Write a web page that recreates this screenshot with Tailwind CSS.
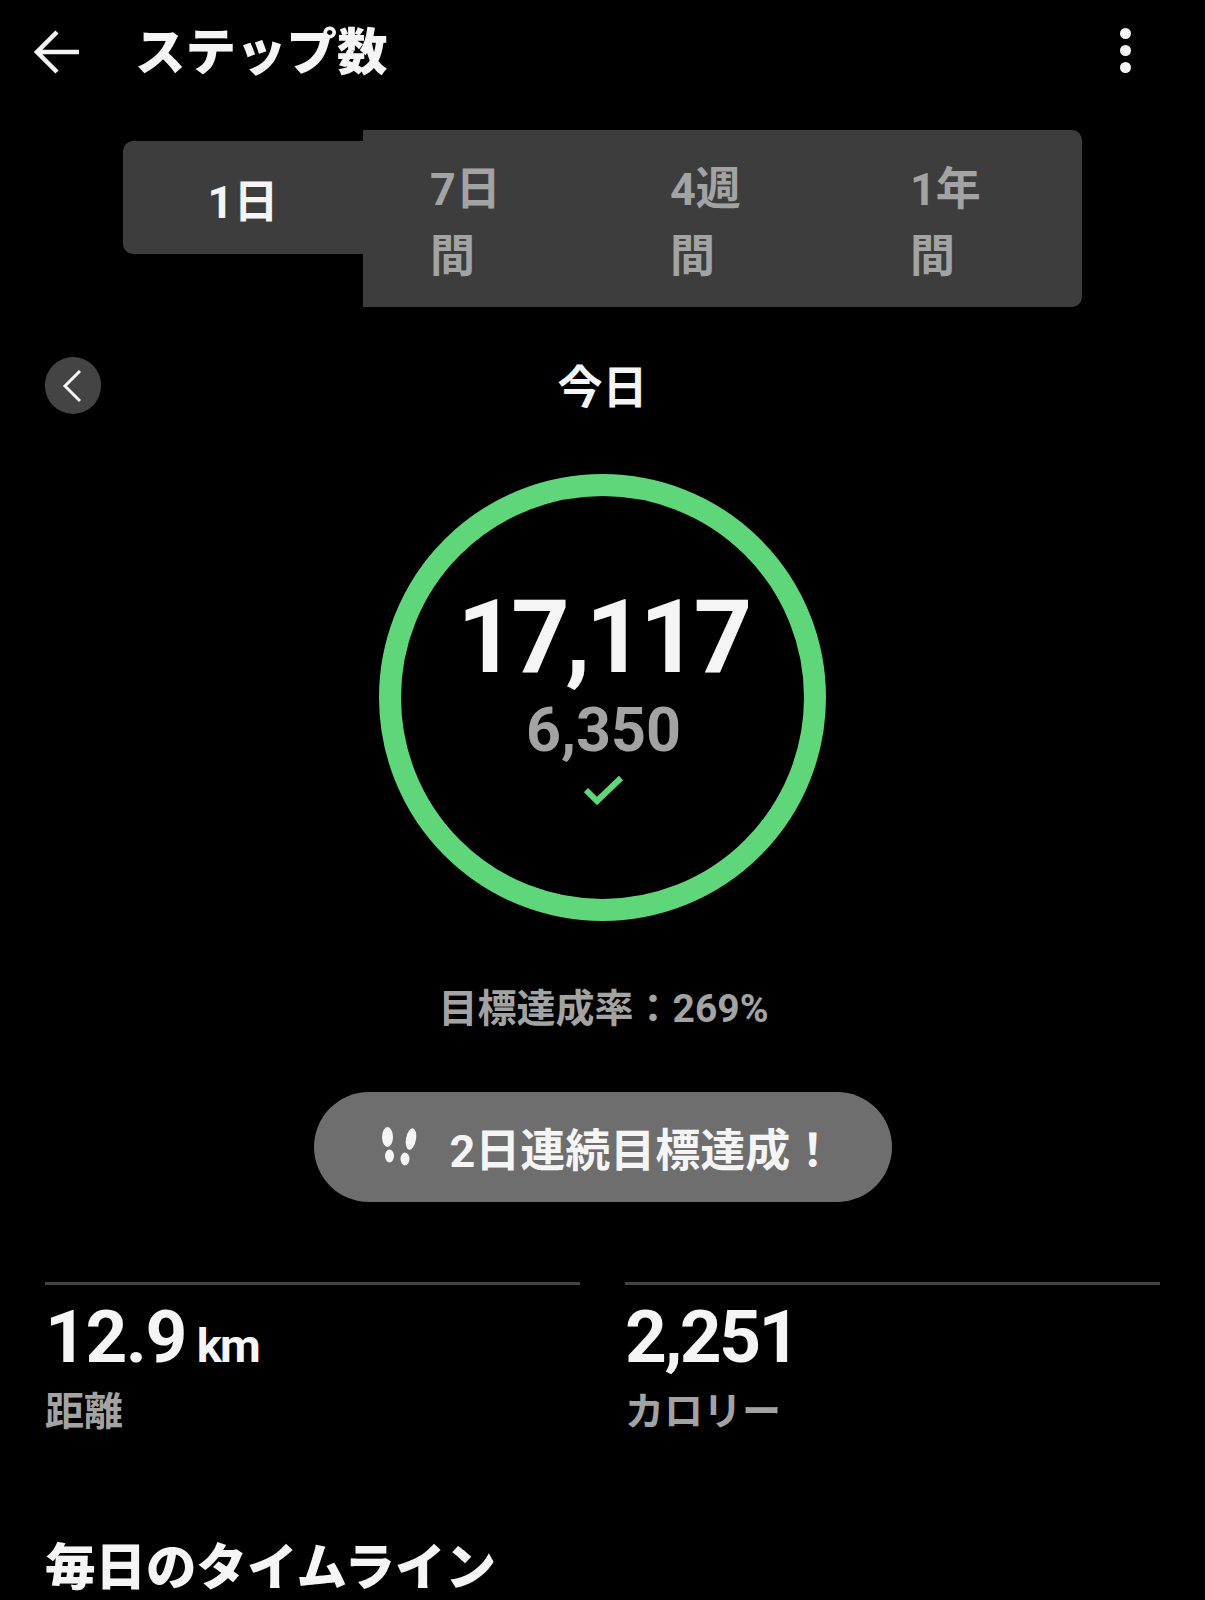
<!DOCTYPE html>
<html lang="ja">
<head>
    <meta charset="UTF-8">
    <meta name="viewport" content="width=device-width, initial-scale=1.0">
    <title>ステップ数</title>
    <script src="https://cdn.jsdelivr.net/npm/@tailwindcss/browser@4"></script>
</head>
<body class="bg-black">
<div class="w-[1205px] h-[1600px] overflow-hidden bg-black text-[#f5f5f5] font-['Roboto','Noto_Sans_CJK_JP',sans-serif]">

    <!-- header -->
    <header class="h-[104px] flex items-center pl-[32px] pr-[74px]">
        <svg class="w-[50px] h-[50px]" viewBox="0 0 50 50" fill="none" stroke="#f5f5f5" stroke-width="4.5">
            <path d="M47 25H6M25 5L5 25L25 45"/>
        </svg>
        <h1 class="ml-[53px] mt-[3px] text-[50.5px] leading-none font-black">ステップ数</h1>
        <div class="ml-auto mt-[-4px] flex flex-col gap-[6px]">
            <span class="block w-[11px] h-[11px] rounded-full bg-[#f5f5f5]"></span>
            <span class="block w-[11px] h-[11px] rounded-full bg-[#f5f5f5]"></span>
            <span class="block w-[11px] h-[11px] rounded-full bg-[#f5f5f5]"></span>
        </div>
    </header>

    <!-- tabs -->
    <div class="flex items-start pl-[123px] mt-[26px]">
        <div class="w-[240px] h-[113px] mt-[11px] pt-[10px] rounded-l-[10px] bg-[#3d3d3d] flex items-center justify-center text-[45px] font-bold">1日</div>
        <div class="flex bg-[#3d3d3d] rounded-r-[10px] w-[719px] h-[177px] text-[#a3a3a3] text-[45px] font-bold leading-[67px]">
            <div class="w-[240px] px-[67px] pt-[26px]">7日間</div>
            <div class="w-[240px] px-[67px] pt-[26px]">4週間</div>
            <div class="w-[239px] px-[67px] pt-[26px]">1年間</div>
        </div>
    </div>

    <!-- date -->
    <div class="relative h-[57px] mt-[50px] flex items-center justify-center">
        <button class="absolute left-[45px] top-0 w-[56px] h-[57px] rounded-full bg-[#444444] flex items-center justify-center">
            <svg class="w-[30px] h-[36px]" viewBox="0 0 30 36" fill="none" stroke="#f5f5f5" stroke-width="3"><path d="M22 3L7 18L22 33"/></svg>
        </button>
        <div class="mt-[6px] text-[45px] leading-none font-bold">今日</div>
    </div>

    <!-- ring -->
    <div class="mt-[60px] flex justify-center">
        <div class="w-[447px] h-[447px] rounded-full border-[22px] border-[#5fd67a] flex flex-col items-center">
            <div class="mt-[91px] text-[102px] leading-[100px] font-bold tracking-[-4.5px]">17,117</div>
            <div class="mt-[11px] ml-[2px] text-[61px] leading-[64px] font-bold text-[#a3a3a3]">6,350</div>
            <svg class="mt-[12px] ml-[2px] w-[40px] h-[32px]" viewBox="0 0 40 32" fill="none" stroke="#5fd67a" stroke-width="6"><path d="M2 16L13 27L37 4"/></svg>
        </div>
    </div>

    <div class="mt-[64px] ml-[2px] text-center text-[39px] leading-[48px] font-bold text-[#a3a3a3]">目標達成率：269%</div>

    <!-- streak pill -->
    <div class="mt-[59px] flex justify-center">
        <div class="w-[578px] h-[110px] rounded-full bg-[#6e6e6e] flex items-center pl-[67px]">
            <svg class="w-[36px] h-[40px]" viewBox="0 0 36 40" fill="#f5f5f5">
                <ellipse cx="6.5" cy="10" rx="5.5" ry="10"/>
                <ellipse cx="8.5" cy="29" rx="4.5" ry="6.5"/>
                <ellipse cx="30" cy="12" rx="5" ry="11" transform="rotate(10 30 12)"/>
                <ellipse cx="24" cy="32" rx="4.5" ry="6.5"/>
            </svg>
            <span class="ml-[33px] mt-[8px] text-[45px] leading-none font-bold">2日連続目標達成！</span>
        </div>
    </div>

    <!-- stats -->
    <div class="mt-[80px] px-[45px] grid grid-cols-2 gap-[45px]">
        <div class="border-t-[3px] border-[#444444] pt-[16px]">
            <div class="h-[72px] flex items-baseline font-bold leading-[72px] tracking-[-1.5px]">
                <span class="text-[73px]">12.9</span>
                <span class="ml-[11px] text-[47px] tracking-[-2px]">km</span>
            </div>
            <div class="mt-[15px] text-[39px] leading-[48px] font-bold text-[#a3a3a3]">距離</div>
        </div>
        <div class="border-t-[3px] border-[#444444] pt-[16px]">
            <div class="h-[72px] font-bold text-[73px] leading-[72px] tracking-[-2.5px]">2,251</div>
            <div class="mt-[15px] text-[39px] leading-[48px] font-bold text-[#a3a3a3]">カロリー</div>
        </div>
    </div>

    <h2 class="mt-[102px] px-[45px] text-[50.5px] leading-[60px] font-black">毎日のタイムライン</h2>
</div>
</body>
</html>
